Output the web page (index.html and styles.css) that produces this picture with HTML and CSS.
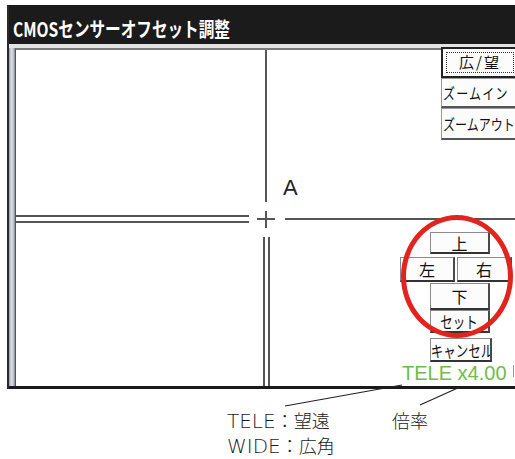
FILE: index.html
```html
<!DOCTYPE html>
<html lang="ja">
<head>
<meta charset="utf-8">
<title>CMOSセンサーオフセット調整</title>
<link rel="stylesheet" href="styles.css">
</head>
<body>
<div class="stage">
  <div class="window">
    <div class="titlebar"><span class="title">CMOSセンサーオフセット調整</span></div>
    <div class="sep"></div>
    <div class="frame">
      <div class="side"></div>
      <div class="canvas">
        <div class="ln v-top"></div>
        <div class="ln v-bot v-bot-a"></div>
        <div class="ln v-bot v-bot-b"></div>
        <div class="ln h-left h-left-a"></div>
        <div class="ln h-left h-left-b"></div>
        <div class="ln h-right"></div>
        <div class="ln cross-h"></div>
        <div class="ln cross-v"></div>
        <div class="label-a">A</div>

        <div class="zoom-group">
          <button class="btn btn-zoom btn-default"><span class="focus">広/望</span></button>
          <button class="btn btn-zoom btn-left"><span class="cond cond-wide">ズームイン</span></button>
          <button class="btn btn-zoom btn-left btn-tall"><span class="cond">ズームアウト</span></button>
        </div>

        <div class="pad">
          <button class="btn pad-btn up">上</button>
          <div class="pad-row">
            <button class="btn side-btn">左</button>
            <button class="btn side-btn">右</button>
          </div>
          <button class="btn pad-btn down">下</button>
          <button class="btn pad-btn set"><span class="narrow">セット</span></button>
          <button class="btn pad-btn cancel"><span class="narrow">キャンセル</span></button>
        </div>

        <div class="ring"></div>
        <div class="mag">TELE x4.00</div>
        <div class="tick"></div>
      </div>
    </div>
  </div>

  <div class="notes">
    <div class="note-left">
      <div class="note-line"><span class="lat">TELE</span>：望遠</div>
      <div class="note-line"><span class="lat">WIDE</span>：広角</div>
    </div>
    <div class="note-right">倍率</div>
  </div>

  <svg class="leaders" width="515" height="459" viewBox="0 0 515 459">
    <line x1="402" y1="385" x2="285" y2="406" stroke="#222" stroke-width="1.2"/>
    <line x1="460" y1="387" x2="420" y2="405" stroke="#222" stroke-width="1.2"/>
  </svg>
</div>
</body>
</html>
```
FILE: styles.css
```css
html, body {
  margin: 0;
  padding: 0;
  background: #fff;
}
body {
  width: 515px;
  height: 459px;
  overflow: hidden;
  font-family: "Noto Sans CJK JP", "Noto Sans", sans-serif;
}
.stage {
  position: relative;
  width: 515px;
  height: 459px;
  padding-top: 5px;
  box-sizing: border-box;
  overflow: hidden;
}
.window {
  margin-left: 7px;
  width: 530px;
  height: 384px;
  overflow: hidden;
  border-left: 2px solid #2b2b2b;
}
.titlebar {
  height: 39px;
  background: #1b1b1b;
  padding: 13px 0 0 4px;
  box-sizing: border-box;
  overflow: hidden;
  white-space: nowrap;
}
.title {
  display: inline-block;
  color: #fff;
  font-weight: 700;
  font-size: 20px;
  line-height: 20px;
  transform: scaleX(0.78);
  transform-origin: left center;
}
.sep {
  height: 4px;
  background: #e4e4e4;
}
.frame {
  display: flex;
  height: 338px;
  border-bottom: 3px solid #1a1a1a;
}
.side {
  width: 6px;
  background: linear-gradient(to right, #8d99a5 0, #d8dee4 35%, #c5ccd4 70%, #7d8791 100%);
}
.canvas {
  position: relative;
  flex: 1;
  height: 336px;
  background: #fff;
  border-top: 2px solid #7a7a7a;
  border-left: 1px solid #555;
}
.ln {
  position: absolute;
  background: #555;
}
.v-top { left: 249px; top: 0; width: 2px; height: 152px; }
.v-bot { top: 187px; width: 2px; height: 149px; }
.v-bot-a { left: 247px; }
.v-bot-b { left: 252px; }
.h-left { left: 0; width: 233px; height: 2px; }
.h-left-a { top: 165px; }
.h-left-b { top: 171px; }
.h-right { left: 269px; top: 168px; width: 260px; height: 2px; }
.cross-h { left: 241px; top: 168px; width: 18px; height: 2px; }
.cross-v { left: 249px; top: 161px; width: 2px; height: 17px; }
.label-a {
  position: absolute;
  left: 267px;
  top: 127px;
  font-family: "Liberation Sans", Arial, sans-serif;
  font-size: 22px;
  line-height: 22px;
  color: #222;
}

.btn {
  box-sizing: border-box;
  margin: 0;
  padding: 0;
  background: #fcfcfc;
  border: 1px solid #8a8a8a;
  border-right: 2px solid #4a4a4a;
  border-bottom: 2px solid #333;
  font-family: "Noto Sans CJK JP", sans-serif;
  font-size: 16px;
  line-height: 18px;
  color: #111;
  white-space: nowrap;
  overflow: hidden;
}
.zoom-group {
  position: absolute;
  left: 425px;
  top: -3px;
  display: flex;
  flex-direction: column;
}
.btn-zoom {
  width: 80px;
  height: 30px;
  text-align: left;
  padding-left: 1px;
}
.btn-default {
  height: 31px;
  border: 2px solid #222;
  padding: 3px;
}
.focus {
  display: block;
  width: 66px;
  height: 19px;
  border: 1px dotted #333;
  text-align: center;
  line-height: 18px;
  font-size: 15px;
  letter-spacing: 2px;
}
.btn-left {
  border-color: #9a9a9a;
  border-right-color: #666;
  border-bottom-color: #555;
}
.cond {
  display: inline-block;
  font-size: 15px;
  transform: scaleX(0.8);
  transform-origin: left center;
}
.cond-wide { letter-spacing: 1.5px; }
.btn-tall { height: 32px; }

.pad {
  position: absolute;
  left: 384px;
  top: 182px;
  display: flex;
  flex-direction: column;
  align-items: flex-start;
}
.pad-btn {
  margin-left: 30px;
  width: 60px;
}
.up { height: 22px; }
.pad-row {
  display: flex;
  gap: 2px;
  margin-top: 3px;
}
.side-btn {
  width: 55px;
  height: 25px;
}
.down { height: 27px; margin-top: 1px; }
.set { height: 23px; }
.cancel { height: 24px; width: 62px; margin-top: 5px; }
.narrow {
  display: inline-block;
  transform: scaleX(0.78);
  font-size: 16px;
}
.cancel .narrow { margin: 0 -9px; }

.ring {
  position: absolute;
  left: 385px;
  top: 165px;
  width: 112px;
  height: 123px;
  box-sizing: border-box;
  border: 5px solid #e3231e;
  border-radius: 50%;
}
.mag {
  position: absolute;
  left: 386px;
  top: 313px;
  font-family: "Liberation Sans", Arial, sans-serif;
  font-size: 20px;
  line-height: 20px;
  color: #6dbd48;
  white-space: nowrap;
}
.tick {
  position: absolute;
  left: 497px;
  top: 315px;
  width: 1px;
  height: 12px;
  background: #999;
}

.notes {
  display: flex;
  margin-top: 19px;
  padding-left: 227px;
  font-weight: 300;
  font-size: 18px;
  line-height: 25px;
  color: #1a1a1a;
}
.note-left { width: 165px; }
.note-line { white-space: nowrap; height: 25px; }
.lat {
  font-family: "DejaVu Sans", sans-serif;
  font-weight: 200;
  font-size: 20px;
  line-height: 0;
}
.leaders {
  position: absolute;
  left: 0;
  top: 0;
  pointer-events: none;
}
```
